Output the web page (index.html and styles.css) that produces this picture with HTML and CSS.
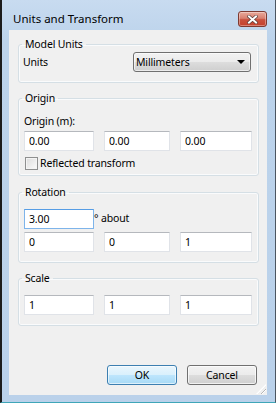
FILE: index.html
```html
<!DOCTYPE html>
<html>
<head>
<meta charset="utf-8">
<link rel="stylesheet" href="styles.css">
</head>
<body>
<div class="window">
  <div class="titlebar">
    <span class="title">Units and Transform</span>
    <button class="close" aria-label="Close">
      <svg width="11" height="9" viewBox="0 0 11 9">
        <path d="M2 1.5 L9 7.5 M9 1.5 L2 7.5" stroke="#5a3a36" stroke-width="3.4" stroke-linecap="square" fill="none"/>
        <path d="M2 1.5 L9 7.5 M9 1.5 L2 7.5" stroke="#ffffff" stroke-width="2" stroke-linecap="square" fill="none"/>
      </svg>
    </button>
  </div>
  <div class="client">
    <fieldset class="group g-model">
      <legend>Model Units</legend>
      <div class="units-row">
        <span class="label">Units</span>
        <div class="select"><span class="select-text">Millimeters</span><span class="arrow"></span></div>
      </div>
    </fieldset>

    <fieldset class="group g-origin">
      <legend>Origin</legend>
      <div class="label line">Origin (m):</div>
      <div class="trio">
        <input class="field" value="0.00">
        <input class="field" value="0.00">
        <input class="field" value="0.00">
      </div>
      <label class="check"><span class="box"></span><span>Reflected transform</span></label>
    </fieldset>

    <fieldset class="group g-rotation">
      <legend>Rotation</legend>
      <div class="angle-row">
        <input class="field focused" value="3.00">
        <span class="label">° about</span>
      </div>
      <div class="trio second">
        <input class="field" value="0">
        <input class="field" value="0">
        <input class="field" value="1">
      </div>
    </fieldset>

    <fieldset class="group g-scale">
      <legend>Scale</legend>
      <div class="trio">
        <input class="field" value="1">
        <input class="field" value="1">
        <input class="field" value="1">
      </div>
    </fieldset>

    <div class="buttons">
      <button class="btn default">OK</button>
      <button class="btn">Cancel</button>
    </div>
    <span class="grip"></span>
  </div>
</div>
</body>
</html>
```

FILE: styles.css
```css
* { box-sizing: border-box; }
html, body { margin: 0; padding: 0; }
body {
  width: 276px;
  height: 403px;
  overflow: hidden;
  font-family: "Noto Sans", "Liberation Sans", sans-serif;
  font-size: 10.5px;
  letter-spacing: -0.15px;
  color: #000;
}
.window {
  width: 276px;
  height: 403px;
  display: flex;
  flex-direction: column;
  background: linear-gradient(#c8dbf0, #bcd3eb 40px, #bad1ea);
  border-left: 2px solid #1c1c1c;
  border-right: 1px solid #4b5560;
  border-bottom: 1px solid #3fa6b8;
}
.titlebar {
  height: 30px;
  flex: none;
  display: flex;
  align-items: flex-start;
  padding-left: 11px;
  padding-right: 8px;
}
.title {
  font-size: 11.5px;
  letter-spacing: 0;
  line-height: 16px;
  margin-top: 11px;
  color: #000;
  flex: 1;
}
.close {
  margin: 11px 0 0 0;
  width: 29px;
  height: 16px;
  padding: 0;
  border: 1px solid #7e3a31;
  border-radius: 3px;
  background: linear-gradient(#e9aa9b, #d98070 45%, #c9503d 55%, #c5412c);
  box-shadow: inset 0 0 0 1px rgba(255,255,255,0.35);
  display: flex;
  align-items: center;
  justify-content: center;
}
.close svg { display: block; }
.client {
  position: relative;
  flex: 1;
  margin: 0 8px 7px 7px;
  background: #f0f0f0;
  padding: 7px 0 0 9px;
  display: flex;
  flex-direction: column;
}
.group {
  width: 241px;
  margin: 0;
  border: 1px solid #d5dfe5;
  border-radius: 3px;
  padding: 0 6px 10px 5px;
  min-width: 0;
  box-shadow: inset 0 0 0 1px #fafbfc;
}
.group legend {
  font-size: 10.5px;
  line-height: 14px;
  padding: 0 3px;
  margin-left: -2px;
  color: #000;
}
.g-origin { margin-top: 8px; padding-bottom: 4px; }
.g-rotation { margin-top: 9px; }
.g-scale { margin-top: 8px; }

.units-row {
  margin-top: 1px;
  display: flex;
  align-items: center;
  height: 20px;
}
.units-row .label { width: 109px; margin-left: -1px; padding-left: 0; }
.select {
  width: 118px;
  height: 20px;
  margin-left: 1px;
  border: 1px solid #707070;
  border-radius: 3px;
  background: linear-gradient(#f2f2f2, #ebebeb 50%, #dddddd 50%, #cfcfcf);
  box-shadow: inset 0 0 0 1px rgba(255,255,255,0.6);
  display: flex;
  align-items: center;
  padding-left: 2px;
  padding-right: 5px;
}
.select-text { flex: 1; color: #000; }
.arrow {
  width: 0; height: 0;
  border-left: 4px solid transparent;
  border-right: 4px solid transparent;
  border-top: 4px solid #000;
}
.label { line-height: 16px; }
.line { margin-top: 8px; }
.trio {
  display: grid;
  grid-template-columns: 70px 66px 72px;
  column-gap: 10px;
  margin-top: 2px;
}
.g-rotation .trio.second { margin-top: 3px; }
.g-scale .trio { margin-top: 10px; }
.field {
  height: 20px;
  width: 100%;
  margin: 0;
  border: 1px solid #e0e3e8;
  border-top-color: #b5b8bd;
  background: #fff;
  font-family: "Noto Sans", "Liberation Sans", sans-serif;
  font-size: 10.5px;
  letter-spacing: -0.15px;
  color: #000;
  padding: 0 0 0 4px;
  outline: none;
}
.field.focused {
  border-color: #7eb4ea;
  border-top-color: #569de5;
}
.check {
  margin-top: 4px;
  display: flex;
  align-items: center;
  height: 16px;
  gap: 2px;
}
.box {
  width: 13px;
  height: 13px;
  margin-left: 1px;
  border: 1px solid #8e8f8f;
  background: linear-gradient(135deg, #dcdcdc, #fbfbfb);
  box-shadow: inset 0 0 0 1px #f4f4f4;
}
.angle-row {
  margin-top: 10px;
  display: flex;
  align-items: center;
  height: 20px;
}
.angle-row .field { width: 70px; }
.angle-row .label { margin-left: 0; line-height: 14px; margin-top: -3px; }

.buttons {
  margin-top: auto;
  margin-bottom: 10px;
  display: flex;
  justify-content: flex-end;
  gap: 10px;
  padding-right: 10px;
}
.btn {
  width: 70px;
  height: 20px;
  margin: 0;
  padding: 0;
  border: 1px solid #707070;
  border-radius: 3px;
  font-family: "Noto Sans", "Liberation Sans", sans-serif;
  font-size: 10.5px;
  letter-spacing: -0.15px;
  color: #000;
  background: linear-gradient(#f2f2f2, #ebebeb 50%, #dddddd 50%, #cfcfcf);
  box-shadow: inset 0 0 0 1px rgba(255,255,255,0.7);
}
.btn.default {
  border-color: #3c7fb1;
  background: linear-gradient(#eaf6fd, #d9f0fc 50%, #bee6fd 50%, #a7d9f5);
  box-shadow: inset 0 0 0 1px rgba(255,255,255,0.6);
}
.grip {
  position: absolute;
  right: 1px;
  bottom: 1px;
  width: 10px;
  height: 10px;
  background: repeating-linear-gradient(135deg, transparent 0 2px, #b6b6b6 2px 3px, #ffffff 3px 4px);
  clip-path: polygon(100% 0, 100% 100%, 0 100%);
}
```
